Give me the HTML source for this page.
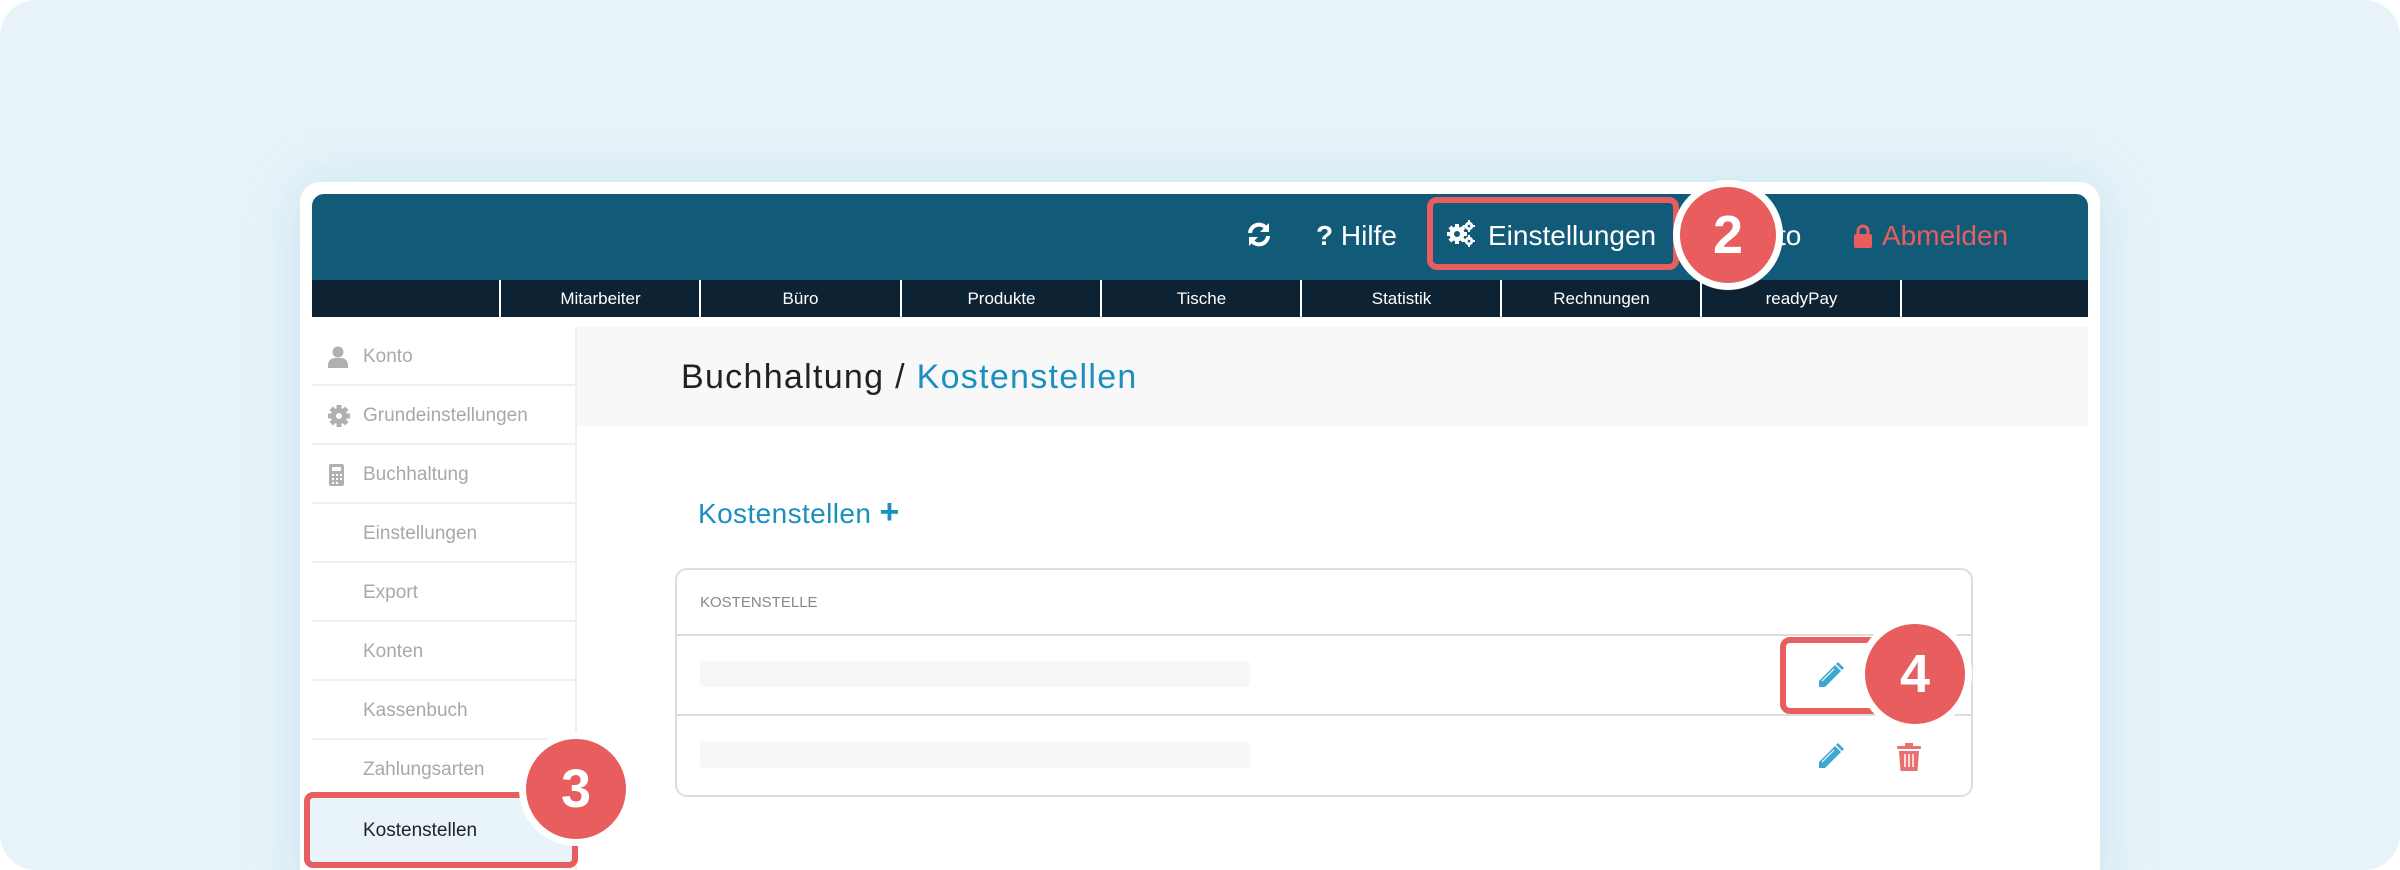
<!DOCTYPE html>
<html><head><meta charset="utf-8">
<style>
*{margin:0;padding:0;box-sizing:border-box}
html,body{width:2400px;height:870px;overflow:hidden;background:#fff}
body{font-family:"Liberation Sans",sans-serif;position:relative}
.bg{position:absolute;left:0;top:0;width:2400px;height:870px;background:#e7f3f9;border-radius:36px}
.abs{position:absolute}
.card{left:300px;top:182px;width:1800px;height:720px;background:#fff;border-radius:20px;box-shadow:0 0 50px rgba(150,200,225,.35)}
.hdr{left:312px;top:194px;width:1776px;height:86px;background:#125b78;border-radius:12px 12px 0 0}
.nav{left:312px;top:280px;width:1776px;height:37px;background:#0d2233}
.nav div{position:absolute;top:0;height:37px;border-left:2px solid #fff;width:201px;color:#fff;font-size:17px;text-align:center;line-height:37px}
.ht{color:#fff;font-size:28px;top:219px;line-height:34px}
.circ{background:#e85d5d;border:7px solid #fff;border-radius:50%;color:#fff;font-weight:bold;text-align:center;font-size:54px}
.side{left:312px;top:327px;width:263px}
.si{position:absolute;left:0;width:263px;height:59px;border-bottom:2px solid #f0f0f0;color:#a8a8a8;font-size:19px;line-height:60px;padding-left:51px}
.si svg{position:absolute;left:16px;top:19px}
</style></head><body>
<div class="bg"></div>
<div class="abs card"></div>
<div class="abs hdr"></div>
<div class="abs nav">
<div style="left:187px">Mitarbeiter</div><div style="left:387px">Büro</div><div style="left:588px">Produkte</div><div style="left:788px">Tische</div><div style="left:988px">Statistik</div><div style="left:1188px">Rechnungen</div><div style="left:1388px">readyPay</div><div style="left:1588px;width:2px"></div>
</div>
<svg class="abs" style="left:1246px;top:221px" width="26" height="27" viewBox="0 0 26 27"><path d="M4 12a9 9 0 0 1 16-5" stroke="#fff" stroke-width="4" fill="none"/><path d="M23 2v9h-9z" fill="#fff"/><path d="M22 15a9 9 0 0 1-16 5" stroke="#fff" stroke-width="4" fill="none"/><path d="M3 25v-9h9z" fill="#fff"/></svg>
<div class="abs ht" style="left:1316px"><b>?</b> Hilfe</div>
<div class="abs" style="left:1427px;top:197px;width:252px;height:73px;border:6px solid #e85d5d;border-radius:10px"></div>
<svg class="abs" style="left:1447px;top:220px" width="28" height="28" viewBox="0 0 28 28">
<g fill="#fff" transform="translate(10 14)">
<rect x="-2" y="-10" width="4" height="20"/><rect x="-2" y="-10" width="4" height="20" transform="rotate(45)"/><rect x="-2" y="-10" width="4" height="20" transform="rotate(90)"/><rect x="-2" y="-10" width="4" height="20" transform="rotate(135)"/>
<circle r="7.5"/><circle r="3" fill="#125b78"/></g>
<g fill="none" stroke="#fff" stroke-width="2.5"><circle cx="22" cy="6" r="3"/><circle cx="22" cy="21" r="3"/></g>
<g fill="#fff"><rect x="21" y="0" width="2" height="12"/><rect x="16" y="5" width="12" height="2"/><rect x="21" y="15" width="2" height="12"/><rect x="16" y="20" width="12" height="2"/></g>
<circle cx="22" cy="6" r="1.3" fill="#125b78"/><circle cx="22" cy="21" r="1.3" fill="#125b78"/>
</svg>
<div class="abs ht" style="left:1488px">Einstellungen</div>
<div class="abs ht" style="left:1778px">to</div>
<svg class="abs" style="left:1853px;top:224px" width="20" height="24" viewBox="0 0 20 24"><path d="M5 11V7a5 5 0 0 1 10 0v4" stroke="#e85d5d" stroke-width="3" fill="none"/><rect x="1" y="10" width="18" height="14" rx="2" fill="#e85d5d"/></svg>
<div class="abs ht" style="left:1882px;color:#e85d5d">Abmelden</div>
<div class="abs circ" style="left:1673px;top:180px;width:110px;height:110px;line-height:96px">2</div>
<div class="abs side">
<div class="si" style="top:0"><svg width="20" height="22" viewBox="0 0 20 22"><circle cx="10" cy="6" r="5.5" fill="#b0b0b0"/><path d="M0 22v-3c0-4 3-7 7-7h6c4 0 7 3 7 7v3z" fill="#b0b0b0"/></svg>Konto</div>
<div class="si" style="top:59px"><svg width="22" height="22" viewBox="0 0 22 22"><g fill="#b0b0b0" transform="translate(11 11)"><rect x="-2.5" y="-11" width="5" height="22"/><rect x="-2.5" y="-11" width="5" height="22" transform="rotate(45)"/><rect x="-2.5" y="-11" width="5" height="22" transform="rotate(90)"/><rect x="-2.5" y="-11" width="5" height="22" transform="rotate(135)"/><circle r="8"/><circle r="3" fill="#fff"/></g></svg>Grundeinstellungen</div>
<div class="si" style="top:118px"><svg width="18" height="22" viewBox="0 0 18 22"><rect x="1" y="0" width="15" height="22" rx="2" fill="#b0b0b0"/><rect x="4" y="3" width="9" height="4" fill="#fff"/><g fill="#fff"><rect x="4" y="10" width="2" height="2"/><rect x="8" y="10" width="2" height="2"/><rect x="12" y="10" width="2" height="2"/><rect x="4" y="14" width="2" height="2"/><rect x="8" y="14" width="2" height="2"/><rect x="12" y="14" width="2" height="2"/><rect x="4" y="18" width="2" height="2"/><rect x="8" y="18" width="2" height="2"/></g></svg>Buchhaltung</div>
<div class="si" style="top:177px">Einstellungen</div>
<div class="si" style="top:236px">Export</div>
<div class="si" style="top:295px">Konten</div>
<div class="si" style="top:354px">Kassenbuch</div>
<div class="si" style="top:413px">Zahlungsarten</div>
</div>
<div class="abs" style="left:575px;top:327px;width:2px;height:543px;background:#f0f0f0"></div>
<div class="abs" style="left:304px;top:792px;width:274px;height:76px;background:#e8f3fa;border:6px solid #e85d5d;border-radius:9px;color:#222;font-size:19px;line-height:66px;padding-left:53px">Kostenstellen</div>
<div class="abs circ" style="left:519px;top:732px;width:114px;height:114px;line-height:100px">3</div>
<div class="abs" style="left:577px;top:327px;width:1511px;height:99px;background:#f8f8f8"></div>
<div class="abs" style="left:681px;top:358px;font-size:34px;color:#222;letter-spacing:1.3px">Buchhaltung / <span style="color:#1a8fc0">Kostenstellen</span></div>
<div class="abs" style="left:698px;top:498px;font-size:28px;color:#1a8fc0;letter-spacing:.4px">Kostenstellen <b style="font-size:34px;line-height:28px">+</b></div>
<div class="abs" style="left:675px;top:568px;width:1298px;height:229px;border:2px solid #ddd;border-radius:12px"></div>
<div class="abs" style="left:700px;top:594px;font-size:15px;color:#888">KOSTENSTELLE</div>
<div class="abs" style="left:676px;top:634px;width:1296px;height:2px;background:#ddd"></div>
<div class="abs" style="left:676px;top:714px;width:1296px;height:2px;background:#ddd"></div>
<div class="abs" style="left:700px;top:661px;width:550px;height:26px;background:#f7f7f7;border-radius:3px"></div>
<div class="abs" style="left:700px;top:742px;width:550px;height:26px;background:#f7f7f7;border-radius:3px"></div>
<svg class="abs" style="left:1817px;top:662px" width="27" height="27" viewBox="0 0 27 27"><path d="M2 19L18 3l6 6L8 25H2z" fill="#3da8cf"/><path d="M19 2l2-2 6 6-2 2z" fill="#3da8cf"/><path d="M5 19L17 7" stroke="#fff" stroke-width="1.2"/></svg>
<svg class="abs" style="left:1817px;top:743px" width="27" height="27" viewBox="0 0 27 27"><path d="M2 19L18 3l6 6L8 25H2z" fill="#3da8cf"/><path d="M19 2l2-2 6 6-2 2z" fill="#3da8cf"/><path d="M5 19L17 7" stroke="#fff" stroke-width="1.2"/></svg>
<svg class="abs" style="left:1897px;top:743px" width="24" height="28" viewBox="0 0 24 28"><rect x="0" y="3" width="24" height="3" rx="1" fill="#ec6f6f"/><rect x="8" y="0" width="8" height="4" fill="#ec6f6f"/><path d="M2 8h20l-1.5 20h-17z" fill="#ec6f6f"/><g stroke="#fff" stroke-width="1.5"><path d="M8 11v13M12 11v13M16 11v13"/></g></svg>
<div class="abs" style="left:1780px;top:637px;width:105px;height:77px;border:6px solid #e85d5d;border-radius:10px"></div>
<div class="abs circ" style="left:1858px;top:617px;width:114px;height:114px;line-height:100px">4</div>
</body></html>
